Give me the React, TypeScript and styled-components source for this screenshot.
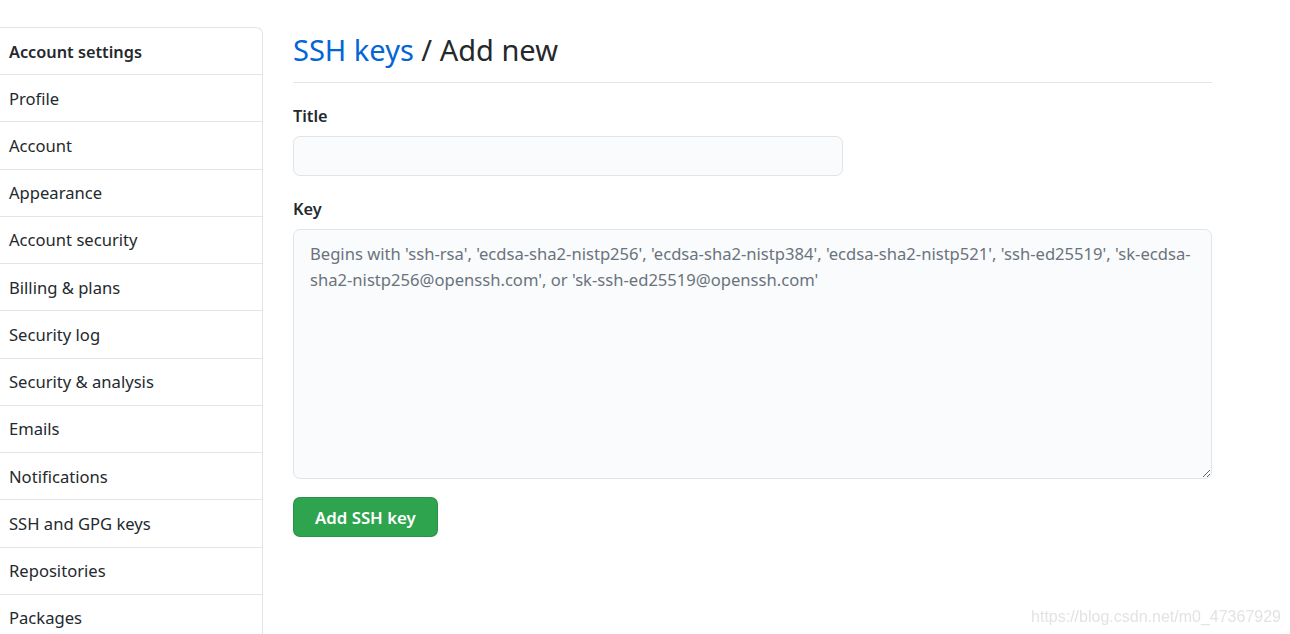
import React from "react";
import styled, { createGlobalStyle } from "styled-components";

const GlobalStyle = createGlobalStyle`
  html, body {
    margin: 0;
    padding: 0;
    background: #fff;
    font-family: "Noto Sans", "Open Sans", sans-serif;
    color: #24292e;
    overflow: hidden;
  }
`;

const Page = styled.div`
  display: flex;
  align-items: flex-start;
  padding-top: 27px;
  height: 607px;
`;

const Sidebar = styled.nav`
  width: 262px;
  flex-shrink: 0;
  border: 1px solid #e1e4e8;
  border-left: none;
  border-bottom: none;
  border-radius: 0 7px 0 0;
`;

const MenuItem = styled.div<{ $heading?: boolean }>`
  box-sizing: border-box;
  display: flex;
  align-items: center;
  padding-left: 9px;
  padding-top: ${(p) => (p.$heading ? "2px" : "0")};
  font-size: ${(p) => (p.$heading ? "16.3px" : "16.6px")};
  font-weight: ${(p) => (p.$heading ? 600 : 400)};
  color: #24292e;
  border-top: ${(p) => (p.$heading ? "none" : "1px solid #e1e4e8")};
  height: ${(p) => (p.$heading ? "46px" : "47.25px")};
`;

const Main = styled.main`
  margin-left: 30px;
  width: 919px;
`;

const Heading = styled.h1`
  margin: 0;
  padding: 4px 0 13px;
  font-size: 29px;
  font-weight: 400;
  line-height: 38px;
  border-bottom: 1px solid #e1e4e8;
  color: #24292e;
`;

const Crumb = styled.span`
  color: #0366d6;
`;

const Label = styled.label`
  display: block;
  font-size: 16.3px;
  font-weight: 600;
  margin: 21px 0 8px;
  line-height: 24px;
`;

const TitleInput = styled.input`
  box-sizing: border-box;
  display: block;
  width: 550px;
  height: 40px;
  border: 1px solid #e1e4e8;
  border-radius: 7px;
  background: #fafbfc;
  outline: none;
`;

const KeyArea = styled.textarea`
  box-sizing: border-box;
  display: block;
  width: 919px;
  height: 250px;
  padding: 11px 16px 10px;
  border: 1px solid #e1e4e8;
  border-radius: 7px;
  background: #fafbfc;
  font-family: "Noto Sans", "Open Sans", sans-serif;
  font-size: 16.6px;
  line-height: 26px;
  color: #24292e;
  outline: none;
  resize: vertical;
  &::placeholder {
    color: #6a737d;
  }
`;

const SubmitButton = styled.button`
  display: block;
  margin-top: 18px;
  height: 40px;
  padding: 0 21px;
  border: 1px solid rgba(27, 31, 35, 0.15);
  border-radius: 7px;
  background: #2ea44f;
  color: #fff;
  font-family: "Noto Sans", "Open Sans", sans-serif;
  font-size: 16.8px;
  font-weight: 600;
`;

const Watermark = styled.div`
  position: fixed;
  right: 9px;
  bottom: 8px;
  font-family: "Liberation Sans", Arial, sans-serif;
  font-size: 16px;
  color: #e3e3e3;
`;

const items = [
  "Profile",
  "Account",
  "Appearance",
  "Account security",
  "Billing & plans",
  "Security log",
  "Security & analysis",
  "Emails",
  "Notifications",
  "SSH and GPG keys",
  "Repositories",
  "Packages",
];

export default function App() {
  return (
    <>
      <GlobalStyle />
      <Page>
        <Sidebar>
          <MenuItem $heading>Account settings</MenuItem>
          {items.map((item) => (
            <MenuItem key={item}>{item}</MenuItem>
          ))}
        </Sidebar>
        <Main>
          <Heading>
            <Crumb>SSH keys</Crumb> / Add new
          </Heading>
          <Label>Title</Label>
          <TitleInput />
          <Label>Key</Label>
          <KeyArea placeholder="Begins with 'ssh-rsa', 'ecdsa-sha2-nistp256', 'ecdsa-sha2-nistp384', 'ecdsa-sha2-nistp521', 'ssh-ed25519', 'sk-ecdsa-sha2-nistp256@openssh.com', or 'sk-ssh-ed25519@openssh.com'" />
          <SubmitButton>Add SSH key</SubmitButton>
        </Main>
      </Page>
      <Watermark>https://blog.csdn.net/m0_47367929</Watermark>
    </>
  );
}
